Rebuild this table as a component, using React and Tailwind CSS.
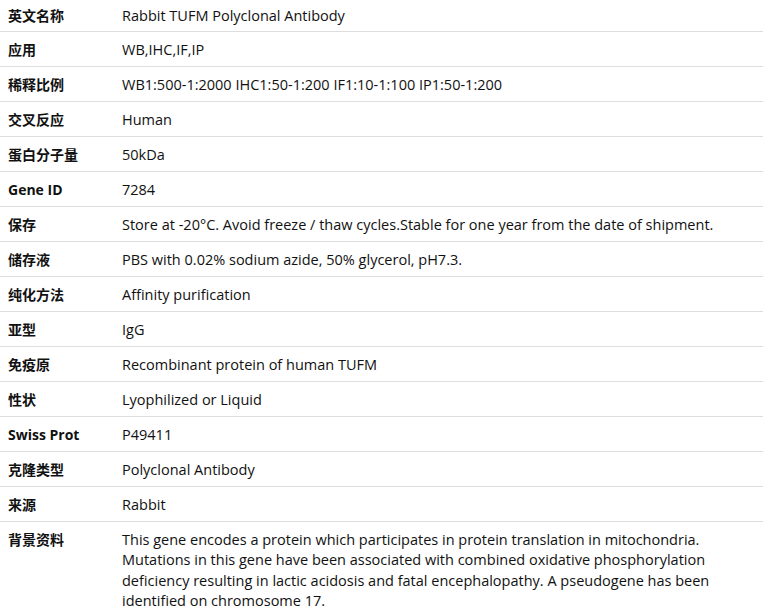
const rows = [
  ["英文名称", "Rabbit TUFM Polyclonal Antibody"],
  ["应用", "WB,IHC,IF,IP"],
  ["稀释比例", "WB1:500-1:2000 IHC1:50-1:200 IF1:10-1:100 IP1:50-1:200"],
  ["交叉反应", "Human"],
  ["蛋白分子量", "50kDa"],
  ["Gene ID", "7284"],
  ["保存", "Store at -20°C. Avoid freeze / thaw cycles.Stable for one year from the date of shipment."],
  ["储存液", "PBS with 0.02% sodium azide, 50% glycerol, pH7.3."],
  ["纯化方法", "Affinity purification"],
  ["亚型", "IgG"],
  ["免疫原", "Recombinant protein of human TUFM"],
  ["性状", "Lyophilized or Liquid"],
  ["Swiss Prot", "P49411"],
  ["克隆类型", "Polyclonal Antibody"],
  ["来源", "Rabbit"],
  [
    "背景资料",
    "This gene encodes a protein which participates in protein translation in mitochondria. Mutations in this gene have been associated with combined oxidative phosphorylation deficiency resulting in lactic acidosis and fatal encephalopathy. A pseudogene has been identified on chromosome 17.",
  ],
]

export default function App() {
  return (
    <div className="w-[771px] h-[612px] overflow-hidden bg-white text-[14.5px] leading-[20px] text-[#111]" style={{ fontFamily: '"Open Sans", "Noto Sans CJK SC", sans-serif' }}>
      <div className="w-[763px]">
        {rows.map(([label, value], i) => (
          <div key={label} className={`flex ${i === 0 ? "pt-[6px] pb-[5px]" : "border-t border-[#dddddd] pt-[8px] pb-[6px]"}`}>
            <div className="w-[122px] shrink-0 pl-[8px] font-bold text-[14px]">{label}</div>
            <div className={`flex-1 pr-[20px] ${i === rows.length - 1 ? "leading-[20.4px]" : ""}`}>{value}</div>
          </div>
        ))}
      </div>
    </div>
  )
}
